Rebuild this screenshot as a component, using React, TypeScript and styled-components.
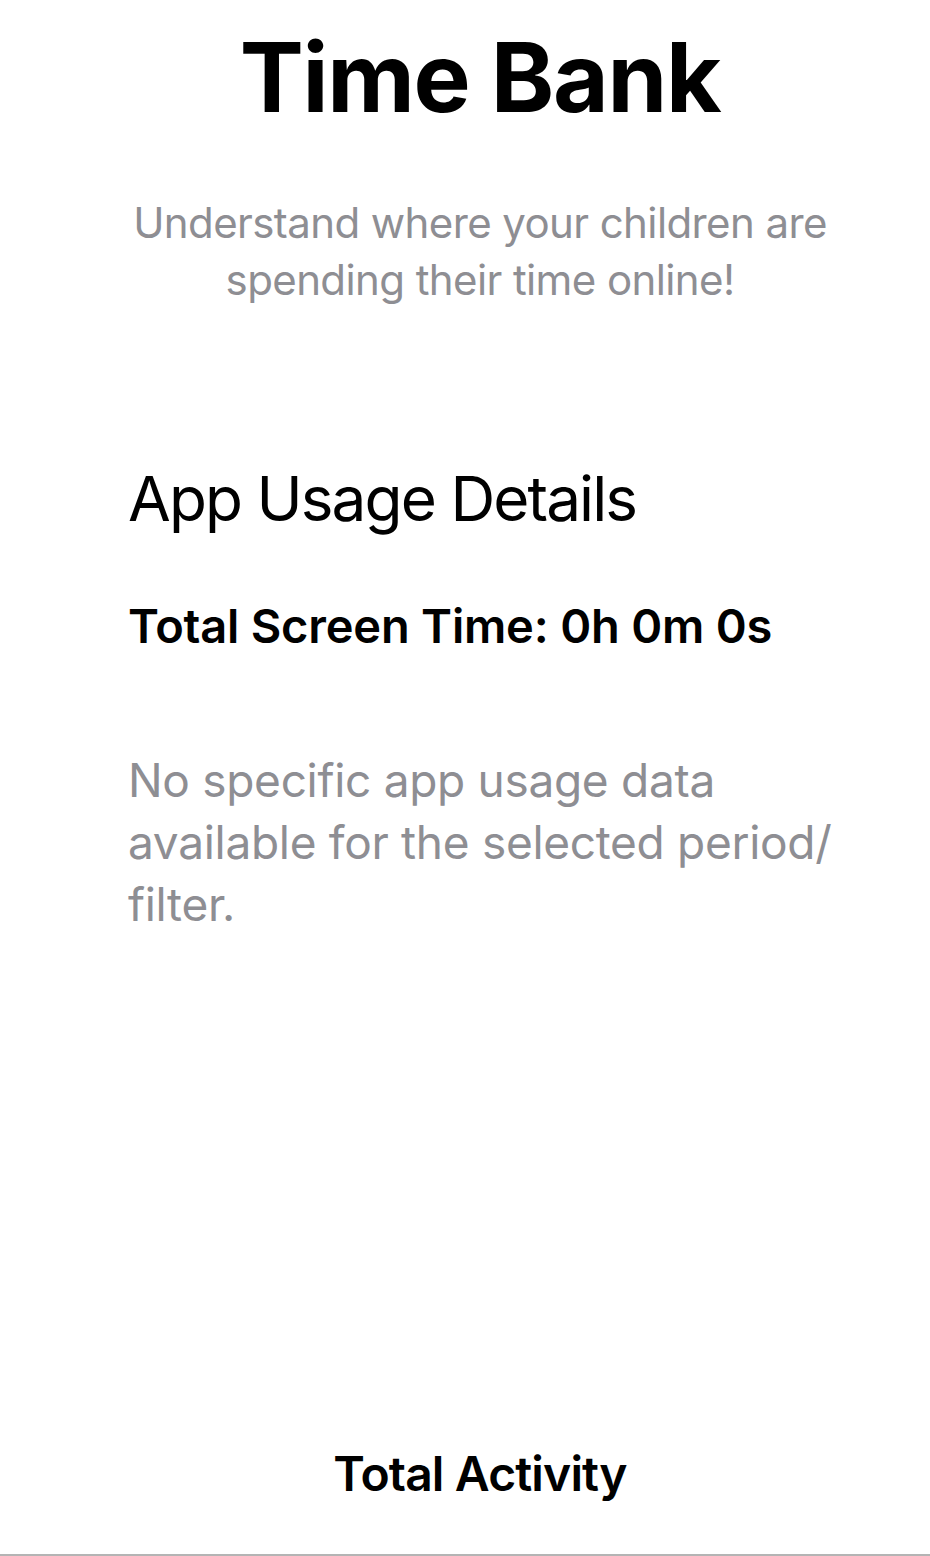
import React from "react";
import styled, { createGlobalStyle } from "styled-components";

const GlobalStyle = createGlobalStyle`
  html, body {
    margin: 0;
    padding: 0;
    background: #ffffff;
  }
  body {
    font-family: Inter, "Noto Sans", "Liberation Sans", sans-serif;
    color: #000000;
    -webkit-font-smoothing: antialiased;
  }
  * { box-sizing: border-box; }
`;

const Page = styled.div`
  width: 930px;
  min-height: 1556px;
  padding-left: 30px;
  display: flex;
  flex-direction: column;
  overflow: hidden;
`;

const Header = styled.header`
  display: flex;
  flex-direction: column;
  align-items: center;
  text-align: center;
  padding-top: 19px;
`;

const Title = styled.h1`
  margin: 0;
  font-size: 96px;
  line-height: 116px;
  font-weight: 700;
  letter-spacing: -1.3px;
`;

const Subtitle = styled.p`
  margin: 59px 0 0;
  width: 720px;
  font-size: 42px;
  line-height: 57px;
  font-weight: 400;
  letter-spacing: -0.6px;
  color: #8e8e93;
`;

const Section = styled.section`
  display: flex;
  flex-direction: column;
  padding: 0 96px 0 98px;
  margin-top: 154px;
`;

const SectionTitle = styled.h2`
  margin: 0;
  font-size: 62px;
  line-height: 74px;
  font-weight: 400;
  letter-spacing: -1.9px;
`;

const Total = styled.div`
  margin-top: 62px;
  font-size: 47px;
  line-height: 56px;
  font-weight: 600;
  letter-spacing: -0.2px;
`;

const Empty = styled.p`
  margin: 95px 0 0;
  font-size: 46px;
  line-height: 62px;
  font-weight: 400;
  letter-spacing: -0.3px;
  color: #8e8e93;
`;

const Spacer = styled.div`
  flex: 1;
`;

const Footer = styled.section`
  display: flex;
  flex-direction: column;
  align-items: center;
  margin-left: -30px;
`;

const FooterTitle = styled.h2`
  margin: 0 0 0 30px;
  font-size: 48px;
  line-height: 58px;
  font-weight: 600;
  letter-spacing: -0.85px;
  text-align: center;
`;

const Divider = styled.div`
  align-self: stretch;
  margin-top: 51px;
  height: 2px;
  background: #b4b4b4;
`;

export default function App() {
  return (
    <>
      <GlobalStyle />
      <Page>
        <Header>
          <Title>Time Bank</Title>
          <Subtitle>Understand where your children are spending their time online!</Subtitle>
        </Header>
        <Section>
          <SectionTitle>App Usage Details</SectionTitle>
          <Total>Total Screen Time: 0h 0m 0s</Total>
          <Empty>
            No specific app usage data available for the selected period/<wbr />filter.
          </Empty>
        </Section>
        <Spacer />
        <Footer>
          <FooterTitle>Total Activity</FooterTitle>
          <Divider />
        </Footer>
      </Page>
    </>
  );
}
